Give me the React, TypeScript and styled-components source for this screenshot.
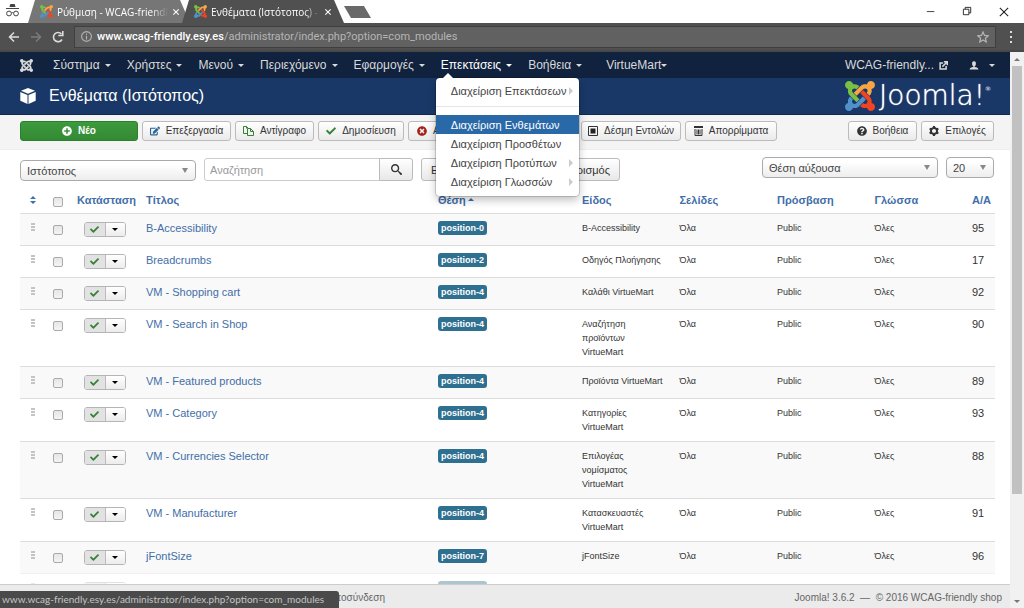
import React from 'react';
import styled, { createGlobalStyle, css } from 'styled-components';
import { FaCheck, FaEdit, FaPlusCircle, FaQuestionCircle, FaTimesCircle } from 'react-icons/fa';
import { ImCog, ImJoomla, ImSearch, ImUser } from 'react-icons/im';

const ui = '"Open Sans", "Noto Sans", sans-serif';
const arial = '"Liberation Sans", Arial, sans-serif';
const link = '#3f6ea8';

const Global = createGlobalStyle`
  *, *::before, *::after { box-sizing: border-box; }
  html, body { margin: 0; padding: 0; }
  body { background: #fff; font-family: ${arial}; font-size: 11px; line-height: 14px; color: #333; overflow: hidden; }
  button, input, select { font: inherit; color: inherit; margin: 0; }
  button { cursor: pointer; }
  a { text-decoration: none; color: inherit; }
  svg { display: block; flex: none; }
`;

const Screen = styled.div`display: flex; flex-direction: column; height: 100vh; position: relative;`;

/* Browser window */
const TabStrip = styled.div`display: flex; height: 23px; background: #fff; color: #fff; font-family: ${ui};`;
const Incognito = styled.div`width: 28px; padding: 3px 0 0 6px;`;
const Tab = styled.div<{ $active?: boolean }>`
  display: flex; align-items: center; gap: 4px;
  width: 162px; height: 23px; padding: 0 12px 0 12px; margin-right: -8px;
  background: ${p => (p.$active ? '#505050' : '#767676')};
  clip-path: polygon(7px 0, 152px 0, 100% 100%, 0 100%);
  font-size: 10px; font-weight: 500; z-index: ${p => (p.$active ? 1 : 0)};
`;
const TabTitle = styled.span`
  flex: 1; white-space: nowrap;
  mask-image: linear-gradient(90deg, #000 85%, transparent);
`;
const Plain = styled.button`
  display: flex; align-items: center; padding: 0; border: 0; background: none;
  &:disabled { opacity: .3; }
`;
const NewTab = styled.button`
  width: 27px; height: 12px; margin: 6px 0 0 8px; padding: 0; border: 0; background: #696969;
  clip-path: polygon(0 0, 20px 0, 100% 100%, 7px 100%);
`;
const WindowButtons = styled.div`display: flex; gap: 26px; align-items: center; margin-left: auto; padding-right: 15px; color: #222;`;
const AddressBar = styled.div`
  display: flex; align-items: center; height: 29px; padding: 0 11px 0 8px; background: #505050; color: #ddd;
  border-bottom: 2px solid #484848;
`;
const BrowserNav = styled.div`display: flex; gap: 10px; width: 66px;`;
const Omnibox = styled.div`
  display: flex; align-items: center; flex: 1; height: 22px; padding: 0 6px; margin-right: 13px;
  background: #616161; border: 1px solid #3f3f3f; font-family: Roboto, sans-serif; font-size: 11px; color: #b5b5b5;
`;
const Url = styled.span`flex: 1; padding-left: 5px; white-space: nowrap; b { color: #fff; font-weight: 500; }`;
const Viewport = styled.div`display: flex; flex: 1; min-height: 0;`;
const Page = styled.div`display: flex; flex-direction: column; flex: 1; min-width: 0;`;
const Scrollbar = styled.div`
  display: flex; flex-direction: column; align-items: center; width: 14px; background: #f1f1f1; color: #777; flex: none;
`;
const ScrollArrow = styled.div`display: flex; align-items: center; height: 14px;`;
const Track = styled.div`flex: 1;`;
const Thumb = styled.div`width: 10px; height: 81%; background: #c1c1c1;`;
const StatusBar = styled.div`
  position: absolute; left: 0; bottom: 0; width: 339px; height: 17px; padding-left: 2px;
  background: #4a4a4a; color: #c4c4c4; border-top-right-radius: 3px;
  font-family: Lato, sans-serif; font-size: 10px; line-height: 17px; white-space: nowrap;
`;

/* Administrator header */
const NavBar = styled.nav`
  display: flex; align-items: center; height: 26px; padding: 0 15px 0 20px;
  background: #10223e; color: #d9d9d9; font-size: 12px; white-space: nowrap;
`;
const NavList = styled.ul`display: flex; gap: 16px; margin: 0; padding: 0 0 0 20px; list-style: none;`;
const NavItem = styled.li<{ $active?: boolean; $apart?: boolean }>`
  position: relative; margin-left: ${p => (p.$apart ? '8px' : '0')};
  ${p => p.$active && css`color: #fff;`}
`;
const NavLink = styled.a<{ $tight?: boolean }>`display: flex; align-items: center; gap: ${p => (p.$tight ? '0' : '5px')};`;
const NavRight = styled.div`display: flex; align-items: center; gap: 21px; margin-left: auto;`;
const Caret = styled.i<{ $up?: boolean }>`
  flex: none; width: 0; height: 0; border: 3px solid transparent;
  ${p => (p.$up ? css`border-top: 0; border-bottom-color: currentColor;` : css`border-bottom: 0; border-top-color: currentColor;`)}
`;
const Menu = styled.ul`
  position: absolute; z-index: 5; top: 20px; left: -5px; width: 143px; height: 118px; margin: 0; padding: 3px 0; list-style: none;
  background: #fff; color: #444; border-radius: 4px; box-shadow: 0 0 0 1px rgba(0,0,0,.15), 0 4px 8px rgba(0,0,0,.25); font-size: 11px;
  &::before { content: ''; position: absolute; top: -5px; left: 6px; border: 6px solid transparent; border-top: 0; border-bottom-color: #fff; }
`;
const MenuItem = styled.li<{ $selected?: boolean }>`
  a { display: flex; align-items: center; justify-content: space-between; height: 19px; padding: 0 6px 0 15px; }
  ${p => p.$selected && css`background: #2a69a8; color: #fff;`}
`;
const Divider = styled.li`height: 1px; margin: 6px 0 8px; background: #e5e5e5;`;

const Header = styled.header`
  display: flex; align-items: center; height: 37px; padding: 0 19px 0 20px; background: #1a3867; border-bottom: 1px solid #12294f; color: #fff;
`;
const PageTitle = styled.h1`margin: 0 0 0 13px; font-size: 16px; line-height: 20px; font-weight: 400;`;
const Brand = styled.div`display: flex; align-items: center; gap: 4px; margin-left: auto;`;
const Word = styled.span`
  font-family: "DejaVu Sans", sans-serif; font-weight: 200; font-size: 28px; line-height: 30px; text-shadow: 0 0 1px #fff;
  sup { font-size: 6px; line-height: 6px; vertical-align: 14px; }
`;

/* Toolbar and filters */
const Toolbar = styled.div`
  display: flex; gap: 4px; height: 35px; padding: 6px 16px 0 20px; background: #f4f4f4; border-bottom: 1px solid #eee; white-space: nowrap;
`;
const ToolButton = styled.button<{ $width: number; $primary?: boolean }>`
  display: flex; align-items: center; justify-content: center; gap: 6px;
  width: ${p => p.$width}px; height: 20px; padding: 0; border: 1px solid #bbb; border-radius: 3px;
  background: linear-gradient(#fff, #eaeaea); font-size: 10px; white-space: nowrap;
  ${p => p.$primary && css`background: linear-gradient(#3d9a3d, #338a33); border-color: #2f7d2f; color: #fff; font-weight: 700;`}
`;
const Spacer = styled.div`flex: 1;`;
const Filters = styled.form`display: flex; padding: 7px 16px 0 20px; align-items: flex-start;`;
const SelectBox = styled.label<{ $width: number; $low?: boolean; $last?: boolean }>`
  display: flex; align-items: center; position: relative; width: ${p => p.$width}px; height: 21px;
  margin-top: ${p => (p.$low ? '3px' : '0')}; margin-right: ${p => (p.$last ? '0' : '8px')};
  border: 1px solid #aaa; border-radius: 4px; background: linear-gradient(#fff 20%, #ededed); color: #444;
  select { appearance: none; width: 100%; height: 19px; padding: 0 6px; border: 0; background: none; outline: 0; }
  svg { position: absolute; right: 7px; pointer-events: none; }
`;
const SearchGroup = styled.div`
  display: flex; margin: 1px 8px 0 0;
  input { width: 176px; height: 23px; padding: 0 5px; border: 1px solid #ccc; border-radius: 3px 0 0 3px; outline: 0; }
  input::placeholder { color: #999; opacity: 1; }
`;
const FilterButton = styled.button<{ $width: number; $joined?: boolean; $right?: boolean }>`
  display: flex; align-items: center; justify-content: ${p => (p.$joined ? 'center' : p.$right ? 'flex-end' : 'flex-start')};
  width: ${p => p.$width}px; height: 23px; padding: 0 9px; border: 1px solid #bbb; background: linear-gradient(#fff, #e8e8e8);
  border-radius: ${p => (p.$joined ? '0 3px 3px 0' : '3px')}; margin: ${p => (p.$joined ? '0 0 0 -1px' : '1px 4px 0 0')}; white-space: nowrap;
`;

/* Modules table */
const Main = styled.main`flex: 1; min-height: 0; overflow: hidden;`;
const TableArea = styled.div`padding: 5px 15px 0 20px;`;
const Table = styled.table`
  width: 100%; table-layout: fixed; border-collapse: separate; border-spacing: 0;
  th { height: 27px; padding: 0 5px; text-align: left; color: ${link}; font-weight: 700; white-space: nowrap; vertical-align: middle; }
  th a { display: inline-flex; align-items: center; gap: 2px; }
  td { padding: 7px 5px; border-top: 1px solid #ddd; vertical-align: top; line-height: 14px; }
  th:nth-child(-n+2), td:nth-child(-n+2) { padding-left: 0; padding-right: 0; }
`;
const Col = styled.col<{ $w?: string }>`width: ${p => p.$w ?? 'auto'};`;
const Row = styled.tr<{ $faded?: boolean }>`
  height: 32px; opacity: ${p => (p.$faded ? 0.4 : 1)};
  &:nth-child(odd) td { background: #f9f9f9; }
`;
const Small = styled.td`font-size: 9px; && { padding-right: 8px; }`;
const Center = styled.div`display: flex; justify-content: center;`;
const Check = styled.input`
  display: block; appearance: none; width: 10px; height: 10px; border: 1px solid #aaa; border-radius: 2px;
  background: linear-gradient(#e6e6e6, #f4f4f4);
  && { margin: 4px 0 0 8px; }
`;
const Toggle = styled.div`
  display: flex; width: 42px; height: 15px; margin: 1px 0 0 7px; border: 1px solid #b5b5b5; border-radius: 3px; overflow: hidden;
  button { display: flex; align-items: center; justify-content: center; flex: 1; padding: 0; border: 0; background: linear-gradient(#fff, #ececec); color: #000; }
  button:first-child { background: #e2e2e2; border-right: 1px solid #bbb; color: #378137; }
`;
const TitleLink = styled.a`color: ${link}; white-space: nowrap;`;
const Badge = styled.span`
  display: inline-block; height: 14px; padding: 0 3px; border-radius: 3px; background: #2f6f8f; color: #fff;
  font-size: 9px; line-height: 14px; font-weight: 700; vertical-align: top;
`;
const Footer = styled.footer`
  display: flex; align-items: center; justify-content: space-between; height: 24px; padding: 2px 8px 0 100px; flex: none;
  background: #ebebeb; border-top: 1px solid #ccc; color: #666; font-size: 10px; white-space: nowrap;
`;
const Session = styled.div`width: 285px; text-align: right;`;

const LogoMark = () => (
  <svg width="30" height="30" viewBox="0 32 448 448">
    <path fill="#7ac143" d="M.6 92.1C.6 58.8 27.4 32 60.4 32c30 0 54.5 21.9 59.2 50.2 32.6-7.6 67.1.6 96.5 30l-44.3 44.3c-20.5-20.5-42.6-16.3-55.4-3.5-14.3 14.3-14.3 37.9 0 52.2l99.5 99.5-44 44.3c-87.7-87.2-49.7-49.7-99.8-99.7-26.8-26.5-35-64.8-24.8-98.9C20.4 144.6.6 120.7.6 92.1z" />
    <path fill="#f9a541" d="M130.1 208.5l44.3 44.3c10-10 89.7-89.7 99.7-99.8 14.3-14.3 37.6-14.3 51.9 0 12.8 12.8 17 35-3.5 55.4l44 44.3c31.2-31.2 38.5-67.6 28.9-101.2 29.2-4.1 51.9-29.2 51.9-59.5 0-33.2-26.8-60.1-59.8-60.1-30.3 0-55.4 22.5-59.5 51.6-33.8-9.9-71.7-1.5-98.3 25.1-18.3 19.1-71.1 71.5-99.6 99.9z" />
    <path fill="#f44321" d="M396.4 360.7c8.2-32.7-.9-68.5-26.3-93.9-11.8-12.2 5 4.7-99.5-99.7l-44.3 44.3 99.7 99.7c14.3 14.3 14.3 37.6 0 51.9-12.8 12.8-35 17-55.4-3.5l-44 44.3c27.6 30.2 68 38.8 102.7 28 5.5 27.4 29.7 48.1 58.9 48.1 33 0 59.8-26.8 59.8-60.1 0-30.2-22.5-55-51.6-59.1z" />
    <path fill="#5091cd" d="M312.1 307.6l-44-44.3c-87 86.4-50.4 50.4-99.7 99.8-14.3 14.3-37.6 14.3-51.9 0-13.1-13.4-16.9-35.3 3.2-55.4l-44-44.3c-30.2 30.2-38 65.2-29.5 98.3-26.7 6-46.2 29.9-46.2 58.2C0 453.2 26.8 480 59.8 480c28.6 0 52.5-19.8 58.6-46.7 32.7 8.2 68.5-.6 94.2-26 32.1-32 12.2-12.4 99.5-99.7z" />
  </svg>
);
const Favicon = styled(({ className }: { className?: string }) => <span className={className}><LogoMark /></span>)`
  svg { width: 13px; height: 13px; }
`;
const Stroke = ({ d, w = 12, h = 12, sw = 1, box = '0 0 12 12' }: { d: string; w?: number; h?: number; sw?: number; box?: string }) => (
  <svg width={w} height={h} viewBox={box} fill="none" stroke="currentColor" strokeWidth={sw}><path d={d} /></svg>
);
const CloseX = () => <Stroke d="M2 2l8 8M10 2l-8 8" w={8} h={8} sw={1.6} />;
const Down = () => <svg width="6" height="5" viewBox="0 0 6 5"><path d="M0 0h6L3 5z" fill="#888" /></svg>;
const Sub = () => <svg width="4" height="8" viewBox="0 0 4 8"><path d="M0 0l4 4-4 4z" fill="#ccc" /></svg>;
const Dots = () => (
  <svg width="4" height="11" viewBox="0 0 4 11" fill="#c4c4c4">
    {[2, 5, 8].map(y => <path key={y} d={`M0 ${y}h4v2H0z`} />)}
  </svg>
);

const nav = ['Σύστημα', 'Χρήστες', 'Μενού', 'Περιεχόμενο', 'Εφαρμογές', 'Επεκτάσεις', 'Βοήθεια', 'VirtueMart'];
const rows: [string, string, string, string][] = [
  ['B-Accessibility', 'position-0', 'B-Accessibility', '95'],
  ['Breadcrumbs', 'position-2', 'Οδηγός Πλοήγησης', '17'],
  ['VM - Shopping cart', 'position-4', 'Καλάθι VirtueMart', '92'],
  ['VM - Search in Shop', 'position-4', 'Αναζήτηση προϊόντων VirtueMart', '90'],
  ['VM - Featured products', 'position-4', 'Προϊόντα VirtueMart', '89'],
  ['VM - Category', 'position-4', 'Κατηγορίες VirtueMart', '93'],
  ['VM - Currencies Selector', 'position-4', 'Επιλογέας νομίσματος VirtueMart', '88'],
  ['VM - Manufacturer', 'position-4', 'Κατασκευαστές VirtueMart', '91'],
  ['jFontSize', 'position-7', 'jFontSize', '96'],
  ['Main Menu', 'position-7', 'Μενού', '1'],
];

const ExtensionsMenu = () => (
  <Menu>
    <MenuItem><a href="#manage">Διαχείριση Επεκτάσεων<Sub /></a></MenuItem>
    <Divider />
    <MenuItem $selected><a href="#modules">Διαχείριση Ενθεμάτων</a></MenuItem>
    <MenuItem><a href="#plugins">Διαχείριση Προσθέτων</a></MenuItem>
    <MenuItem><a href="#templates">Διαχείριση Προτύπων<Sub /></a></MenuItem>
    <MenuItem><a href="#languages">Διαχείριση Γλωσσών<Sub /></a></MenuItem>
  </Menu>
);

export default function App() {
  return (
    <Screen>
      <Global />
      <TabStrip>
        <Incognito>
          <svg width="13" height="14" viewBox="0 0 13 14" fill="none" stroke="#444">
            <path d="M3.5 4L4.3 1h4.4l.8 3z" fill="#444" stroke="none" /><path d="M0 5.5h13" />
            <circle cx="3" cy="10.5" r="2.4" /><circle cx="10" cy="10.5" r="2.4" /><path d="M5.4 10q1.1-.8 2.2 0" />
          </svg>
        </Incognito>
        <Tab><Favicon /><TabTitle>Ρύθμιση - WCAG-friendl</TabTitle><Plain aria-label="Close tab"><CloseX /></Plain></Tab>
        <Tab $active><Favicon /><TabTitle>Ενθέματα (Ιστότοπος) -</TabTitle><Plain aria-label="Close tab"><CloseX /></Plain></Tab>
        <NewTab aria-label="New tab" />
        <WindowButtons>
          <Plain aria-label="Minimize"><Stroke d="M1 5.5h9" w={10} h={10} /></Plain>
          <Plain aria-label="Restore"><Stroke d="M1.5 3.5h6v6h-6zM3.5 3.5v-2h6v6h-2" w={11} h={11} /></Plain>
          <Plain aria-label="Close"><Stroke d="M1 1l10 10M11 1L1 11" w={10} h={10} sw={1.3} /></Plain>
        </WindowButtons>
      </TabStrip>
      <AddressBar>
        <BrowserNav>
          <Plain aria-label="Back"><Stroke d="M11 6H1.5M6 1.5L1.5 6 6 10.5" sw={1.5} /></Plain>
          <Plain aria-label="Forward" disabled><Stroke d="M1 6h9.5M6 1.5L10.5 6 6 10.5" sw={1.5} /></Plain>
          <Plain aria-label="Reload"><Stroke d="M10 8.5A4.6 4.6 0 1 1 9.5 3M10.8 0v4.5H6.3" sw={1.6} /></Plain>
        </BrowserNav>
        <Omnibox>
          <Stroke d="M6 .7a5.3 5.3 0 1 0 .01 0zM6 5.3v4M6 2.7v1.4" w={11} h={11} sw={1.2} />
          <Url><b>www.wcag-friendly.esy.es</b>/administrator/index.php?option=com_modules</Url>
          <Plain aria-label="Bookmark"><Stroke d="M6 1l1.5 3.4 3.7.4-2.8 2.4.8 3.7L6 9l-3.2 1.9.8-3.7L.8 4.8l3.7-.4z" sw={1.2} /></Plain>
        </Omnibox>
        <Plain aria-label="Browser menu">
          <svg width="4" height="12" viewBox="0 0 4 12" fill="#ddd"><path d="M1 0h2v2H1zM1 5h2v2H1zM1 10h2v2H1z" /></svg>
        </Plain>
      </AddressBar>

      <Viewport>
        <Page>
          <NavBar>
            <ImJoomla size={13} />
            <NavList>
              {nav.map(n => (
                <NavItem key={n} $active={n === 'Επεκτάσεις'} $apart={n === 'VirtueMart'}>
                  <NavLink href="#menu" $tight={n === 'VirtueMart'}>{n}<Caret /></NavLink>
                  {n === 'Επεκτάσεις' && <ExtensionsMenu />}
                </NavItem>
              ))}
            </NavList>
            <NavRight>
              <NavLink href="#site">WCAG-friendly...<Stroke d="M5.5 2.5h-4v8h8v-4M4.5 7.5L10 2M6.5 1H11v4.5" w={9} h={9} sw={2} /></NavLink>
              <NavLink href="#user"><ImUser size={10} /><span /><Caret /></NavLink>
            </NavRight>
          </NavBar>
          <Header>
            <svg width="16" height="16" viewBox="0 0 16 16" fill="#fff">
              <path d="M8 0l7 2.8L8 5.8 1 2.8zM.3 4l7.2 3v9L.3 12.8zM15.7 4L8.5 7v9l7.2-3.2z" />
            </svg>
            <PageTitle>Ενθέματα (Ιστότοπος)</PageTitle>
            <Brand><LogoMark /><Word>Joomla!<sup>®</sup></Word></Brand>
          </Header>
          <Toolbar>
            <ToolButton $width={118} $primary><FaPlusCircle size={10} />Νέο</ToolButton>
            <ToolButton $width={89}><FaEdit size={10} color="#2a6496" />Επεξεργασία</ToolButton>
            <ToolButton $width={79}>
              <svg width="11" height="10" viewBox="0 0 11 10" fill="none" stroke="#378137"><path d="M4 7.5H.5v-7h3L5.5 2.5M3.5.5v2M4.5 2.5h3l3 3v4h-6zM7.5 2.5v3h3" /></svg>
              Αντίγραφο
            </ToolButton>
            <ToolButton $width={86}><FaCheck size={10} color="#378137" />Δημοσίευση</ToolButton>
            <ToolButton $width={82}><FaTimesCircle size={10} color="#a5231c" />Απόσυρση</ToolButton>
            <ToolButton $width={83}>Έλεγχος</ToolButton>
            <ToolButton $width={100}>
              <svg width="10" height="10" viewBox="0 0 10 10"><path d="M.5.5h9v9h-9z" fill="none" stroke="#333" /><path d="M2.5 2.5h5v5h-5z" fill="#222" /></svg>
              Δέσμη Εντολών
            </ToolButton>
            <ToolButton $width={92}>
              <svg width="9" height="10" viewBox="0 0 9 10" fill="none" stroke="#333"><path d="M0 1h9" strokeWidth="2" /><path d="M1 3v6.5h7V3M3 3.5v5M4.5 3.5v5M6 3.5v5" /></svg>
              Απορρίμματα
            </ToolButton>
            <Spacer />
            <ToolButton $width={69}><FaQuestionCircle size={10} />Βοήθεια</ToolButton>
            <ToolButton $width={73}><ImCog size={10} />Επιλογές</ToolButton>
          </Toolbar>
          <Main>
            <Filters onSubmit={e => e.preventDefault()}>
              <SelectBox $width={176} $low><select aria-label="Ιστότοπος"><option>Ιστότοπος</option></select><Down /></SelectBox>
              <SearchGroup>
                <input type="text" aria-label="Αναζήτηση" placeholder="Αναζήτηση" />
                <FilterButton $width={34} $joined aria-label="Search"><ImSearch size={11} /></FilterButton>
              </SearchGroup>
              <FilterButton $width={106}>Εργαλεία</FilterButton>
              <FilterButton $width={89} $right>Καθαρισμός</FilterButton>
              <Spacer />
              <SelectBox $width={176}><select aria-label="Ταξινόμηση"><option>Θέση αύξουσα</option></select><Down /></SelectBox>
              <SelectBox $width={48} $last><select aria-label="Όριο"><option>20</option></select><Down /></SelectBox>
            </Filters>
            <TableArea>
              <Table>
                <colgroup>
                  <Col $w="25px" /><Col $w="27px" /><Col $w="69px" /><Col /><Col $w="144px" />
                  <Col $w="10%" /><Col $w="10%" /><Col $w="10%" /><Col $w="10%" /><Col $w="28px" />
                </colgroup>
                <thead>
                  <tr>
                    <th><Center><a href="#order" aria-label="Σειρά"><svg width="6" height="8" viewBox="0 0 6 8" fill={link}><path d="M0 3l3-3 3 3zM0 5h6L3 8z" /></svg></a></Center></th>
                    <th><Check type="checkbox" aria-label="Επιλογή όλων" /></th>
                    <th><a href="#state">Κατάσταση</a></th>
                    <th><a href="#title">Τίτλος</a></th>
                    <th><a href="#position">Θέση <Caret $up /></a></th>
                    <th><a href="#type">Είδος</a></th>
                    <th><a href="#pages">Σελίδες</a></th>
                    <th><a href="#access">Πρόσβαση</a></th>
                    <th><a href="#language">Γλώσσα</a></th>
                    <th><a href="#id">Α/Α</a></th>
                  </tr>
                </thead>
                <tbody>
                  {rows.map(([title, pos, type, id], i) => (
                    <Row key={id} $faded={i === rows.length - 1}>
                      <td><Center><Dots /></Center></td>
                      <td><Check type="checkbox" aria-label={title} /></td>
                      <td>
                        <Toggle>
                          <button aria-label="Δημοσιευμένο"><FaCheck size={9} /></button>
                          <button aria-label="Ενέργειες"><Caret /></button>
                        </Toggle>
                      </td>
                      <td><TitleLink href="#edit">{title}</TitleLink></td>
                      <td><Badge>{pos}</Badge></td>
                      <Small>{type}</Small>
                      <Small>Όλα</Small>
                      <Small>Public</Small>
                      <Small>Όλες</Small>
                      <td>{id}</td>
                    </Row>
                  ))}
                </tbody>
              </Table>
            </TableArea>
          </Main>
          <Footer>
            <Session><a href="#logout">Αποσύνδεση</a></Session>
            <span>Joomla! 3.6.2 &nbsp;—&nbsp; © 2016 WCAG-friendly shop</span>
          </Footer>
        </Page>
        <Scrollbar>
          <ScrollArrow><Caret $up /></ScrollArrow>
          <Track><Thumb /></Track>
          <ScrollArrow><Caret /></ScrollArrow>
        </Scrollbar>
      </Viewport>
      <StatusBar>www.wcag-friendly.esy.es/administrator/index.php?option=com_modules</StatusBar>
    </Screen>
  );
}
